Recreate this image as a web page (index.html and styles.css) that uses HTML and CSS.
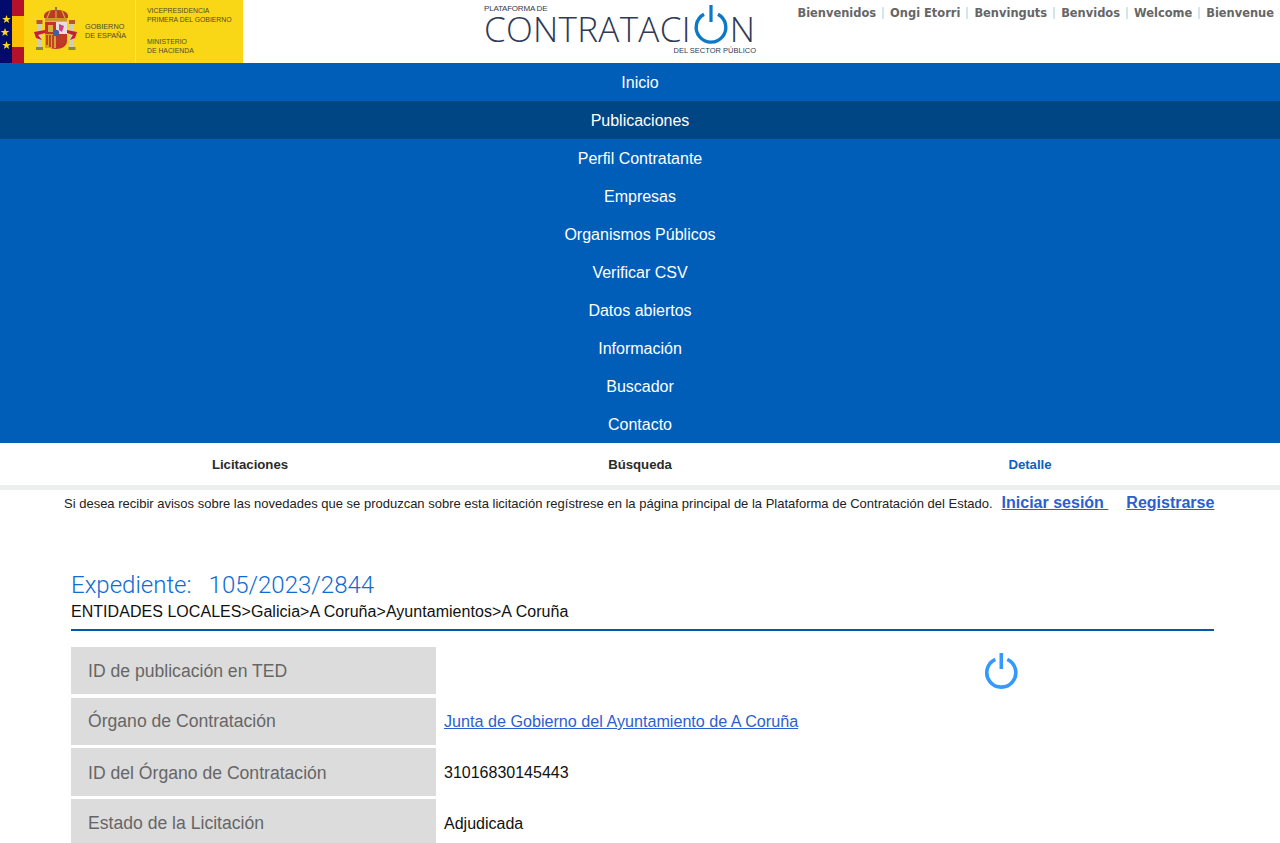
FILE: index.html
```html
<!DOCTYPE html>
<html lang="es">
<head>
<meta charset="utf-8">
<title>Plataforma de Contratación del Sector Público</title>
<link rel="stylesheet" href="styles.css">
</head>
<body>
<header class="top">
  <div class="gov">
    <div class="gov-flag">
      <svg class="stars" width="11" height="63" viewBox="0 0 11 63">
        <polygon points="6.5,15 7.6,18 10.8,18 8.2,20 9.2,23 6.5,21.2 3.8,23 4.8,20 2.2,18 5.4,18" fill="#ffd51c"/>
        <polygon points="5,28 6.1,31 9.3,31 6.7,33 7.7,36 5,34.2 2.3,36 3.3,33 .7,31 3.9,31" fill="#ffd51c"/>
        <polygon points="6.5,41 7.6,44 10.8,44 8.2,46 9.2,49 6.5,47.2 3.8,49 4.8,46 2.2,44 5.4,44" fill="#ffd51c"/>
      </svg>
      <div class="stripes"><i class="red"></i><i class="yel"></i><i class="red"></i></div>
    </div>
    <div class="gov-left">
      <svg class="crest" width="44" height="46" viewBox="0 0 44 46">
        <rect x="3.5" y="15" width="4" height="27" fill="#cfcdbd"/>
        <rect x="36" y="15" width="4" height="27" fill="#cfcdbd"/>
        <rect x="2.5" y="13" width="6" height="4" fill="#b8572b"/>
        <rect x="35" y="13" width="6" height="4" fill="#b8572b"/>
        <rect x="2" y="40" width="7" height="3" fill="#8d8450"/>
        <rect x="34.5" y="40" width="7" height="3" fill="#8d8450"/>
        <path d="M0 25 L11 23 L11 26 L4 28 L8 33 L2 31Z" fill="#c6202c"/>
        <path d="M43 25 L33 23 L33 26 L39 28 L36 33 L41 31Z" fill="#c6202c"/>
        <path d="M10 11 C9 4 16 3 22 3 C28 3 35 4 34 11Z" fill="#b93a2c"/>
        <path d="M13 11 L16 4 M22 11 V3 M31 11 L28 4" stroke="#d5a92c" stroke-width="1.2"/>
        <rect x="11" y="11" width="22" height="3.5" fill="#c8982b"/>
        <rect x="21" y="0" width="2" height="4" fill="#8f7a30"/>
        <path d="M11 15 H33 V34 C33 39 28 42 22 42 C16 42 11 39 11 34Z" fill="#c5322d"/>
        <rect x="22" y="15" width="11" height="12" fill="#e8dcdc"/>
        <rect x="11" y="27" width="11" height="14" fill="#d9a12a"/>
        <path d="M25 17 L30 19 L28 25 L25 23Z" fill="#c9418b"/>
        <rect x="14" y="18" width="5" height="7" fill="#d8b13a"/>
        <path d="M13 28 v10 M16 28 v12 M19 28 v13" stroke="#b8281f" stroke-width="1.5"/>
        <circle cx="27" cy="33" r="5" fill="#bc3d27"/>
        <circle cx="22" cy="26" r="3.2" fill="#3d5fa8"/>
      </svg>
      <span class="gov-name">GOBIERNO<br>DE ESPAÑA</span>
    </div>
    <div class="gov-right">
      <span>VICEPRESIDENCIA<br>PRIMERA DEL GOBIERNO</span>
      <span>MINISTERIO<br>DE HACIENDA</span>
    </div>
  </div>
  <div class="brand">
    <span class="brand-top">PLATAFORMA DE</span>
    <span class="brand-main">CONTRATACI<svg class="brand-o" width="36" height="42" viewBox="0 0 36 42"><path d="M11 10.3 A14.8 14.8 0 1 0 25 10.3" fill="none" stroke="#0b78c8" stroke-width="3.4"/><rect x="16.4" y="1" width="3.2" height="17" fill="#0b78c8"/></svg>N</span>
    <span class="brand-bottom">DEL SECTOR PÚBLICO</span>
  </div>
  <nav class="langs">
    <a>Bienvenidos</a><a>Ongi Etorri</a><a>Benvinguts</a><a>Benvidos</a><a>Welcome</a><a>Bienvenue</a>
  </nav>
</header>

<nav class="main-nav">
  <a>Inicio</a>
  <a class="active">Publicaciones</a>
  <a>Perfil Contratante</a>
  <a>Empresas</a>
  <a>Organismos Públicos</a>
  <a>Verificar CSV</a>
  <a>Datos abiertos</a>
  <a>Información</a>
  <a>Buscador</a>
  <a>Contacto</a>
</nav>

<nav class="sub-nav">
  <div class="sub-inner">
    <a>Licitaciones</a>
    <a>Búsqueda</a>
    <a class="current">Detalle</a>
  </div>
</nav>

<main class="content">
  <div class="notice">
    <span class="notice-text">Si desea recibir avisos sobre las novedades que se produzcan sobre esta licitación regístrese en la página principal de la Plataforma de Contratación del Estado.</span>
    <a class="notice-link first">Iniciar sesión&nbsp;</a>
    <a class="notice-link">Registrarse</a>
  </div>

  <section class="detail">
    <h1 class="exp"><span>Expediente:</span><span>105/2023/2844</span></h1>
    <p class="crumbs">ENTIDADES LOCALES&gt;Galicia&gt;A Coruña&gt;Ayuntamientos&gt;A Coruña</p>
    <div class="rows">
      <div class="row one"><div class="label">ID de publicación en TED</div><div class="value"></div></div>
      <div class="row two"><div class="label">Órgano de Contratación</div><div class="value"><a class="org">Junta de Gobierno del Ayuntamiento de A Coruña</a></div></div>
      <div class="row three"><div class="label">ID del Órgano de Contratación</div><div class="value">31016830145443</div></div>
      <div class="row four"><div class="label">Estado de la Licitación</div><div class="value">Adjudicada</div></div>
      <svg class="power" width="36" height="38" viewBox="0 0 36 38">
        <path d="M12.3 6.4 A14.5 14.5 0 1 0 24.3 6.4" fill="none" stroke="#3399ff" stroke-width="3.6"/>
        <rect x="16.5" y="0" width="3.6" height="16" fill="#3399ff"/>
      </svg>
    </div>
  </section>
</main>
</body>
</html>
```
FILE: styles.css
```css
* { box-sizing: border-box; }
html, body { margin: 0; height: 843px; overflow: hidden; }
body { font-family: "Liberation Sans", Arial, sans-serif; color: #111; background: #fff; }

.top { position: relative; height: 63px; display: flex; justify-content: space-between; }
.gov { width: 243px; height: 63px; display: flex; background: #f9d616; color: #4f4d2c; }
.gov-flag { width: 24px; display: flex; background: #010b6c; position: relative; }
.stars { flex: none; width: 11px; margin-right: 1px; }
.stripes { flex: 1; display: flex; flex-direction: column; }
.stripes i { display: block; }
.stripes .red { height: 16px; background: #b3122a; }
.stripes .yel { flex: 1; background: #fdbf00; }
.gov-left { width: 112px; display: flex; align-items: center; padding-left: 10px; gap: 7px; border-right: 1px solid #f5e366; }
.crest { flex: none; margin-top: -4px; }
.gov-name { font-size: 7.3px; line-height: 9px; white-space: nowrap; margin-top: -1px; }
.gov-right { flex: 1; display: flex; flex-direction: column; gap: 14px; padding: 7px 0 0 11px; font-size: 6.85px; line-height: 8.5px; white-space: nowrap; }

.brand { position: absolute; left: 484px; top: 0; width: 273px; height: 63px; color: #2f3a55; }
.brand-top { position: absolute; left: 0; top: 4px; font-size: 8px; letter-spacing: -.2px; white-space: nowrap; }
.brand-main { position: absolute; left: 0; top: 11px; width: 273px; display: flex; align-items: flex-end; height: 36px; font-family: "Open Sans", sans-serif; font-weight: 300; font-size: 35px; line-height: 36px; letter-spacing: .3px; white-space: nowrap; }
.brand-o { flex: none; margin: -7px 1px 1px 2px; }
.brand-bottom { position: absolute; right: 1px; top: 46px; font-size: 7.5px; white-space: nowrap; }

.langs { display: flex; padding: 6px 6px 0 0; height: 20px; font-family: "DejaVu Sans", sans-serif; line-height: 14px; font-weight: 700; color: #666; }
.langs a { padding: 0 7px; position: relative; white-space: nowrap; font-size: 11.45px; }
.langs a:last-child { padding-right: 0; }
.langs a + a::before { content: ""; position: absolute; left: -1px; top: 1px; width: 2px; height: 12px; background: #d3e6e8; }

.main-nav { display: flex; flex-direction: column; background: #005eb8; }
.main-nav a { height: 38px; padding-top: 1px; line-height: 38px; text-align: center; color: #fff; font-size: 16px; }
.main-nav a.active { background: #004685; }

.sub-nav { height: 47px; border-bottom: 5px solid #ebefee; background: #fff; }
.sub-inner { width: 1170px; margin: 0 auto; height: 42px; display: grid; grid-template-columns: repeat(3, 1fr); text-align: center; }
.sub-inner a { font-size: 13.2px; font-weight: 700; line-height: 43px; color: #2b2b2b; }
.sub-inner a.current { color: #0a62c2; }

.content { width: 1170px; margin: 0 auto; }
.notice { display: flex; align-items: baseline; padding: 4px 10px 0 9px; height: 22px; white-space: nowrap; }
.notice-text { font-size: 13px; color: #222; }
.notice-link { font-size: 16px; font-weight: 700; color: #2b5fd0; text-decoration: underline; margin-left: 18px; }
.notice-link.first { margin-left: 9px; }

.detail { padding: 0 11px 0 16px; margin-top: 58px; }
.exp { margin: 0; display: flex; gap: 17px; font-family: Roboto, sans-serif; font-weight: 300; font-size: 24px; line-height: 30px; color: #0e6cd2; }
.crumbs { margin: 0; font-size: 16px; letter-spacing: .04px; line-height: 24px; color: #111; border-bottom: 2px solid #0058ac; height: 31px; }
.rows { position: relative; margin-top: 16px; display: flex; flex-direction: column; }
.row { display: flex; }
.one { height: 47px; margin-bottom: 4px; }
.two { height: 47px; margin-bottom: 3px; }
.three { height: 48px; margin-bottom: 3px; }
.four { height: 47px; }
.label { width: 365px; background: #dcdcdc; color: #666; font-size: 17.6px; padding-left: 17px; padding-top: 2px; display: flex; align-items: center; }
.value { padding-left: 8px; padding-top: 2px; font-size: 16px; display: flex; align-items: center; color: #111; }
.two .label, .two .value { padding-top: 0; }
.org { color: #2b5fd0; text-decoration: underline; font-size: 16.15px; }
.power { position: absolute; left: 912px; top: 6px; }
```
